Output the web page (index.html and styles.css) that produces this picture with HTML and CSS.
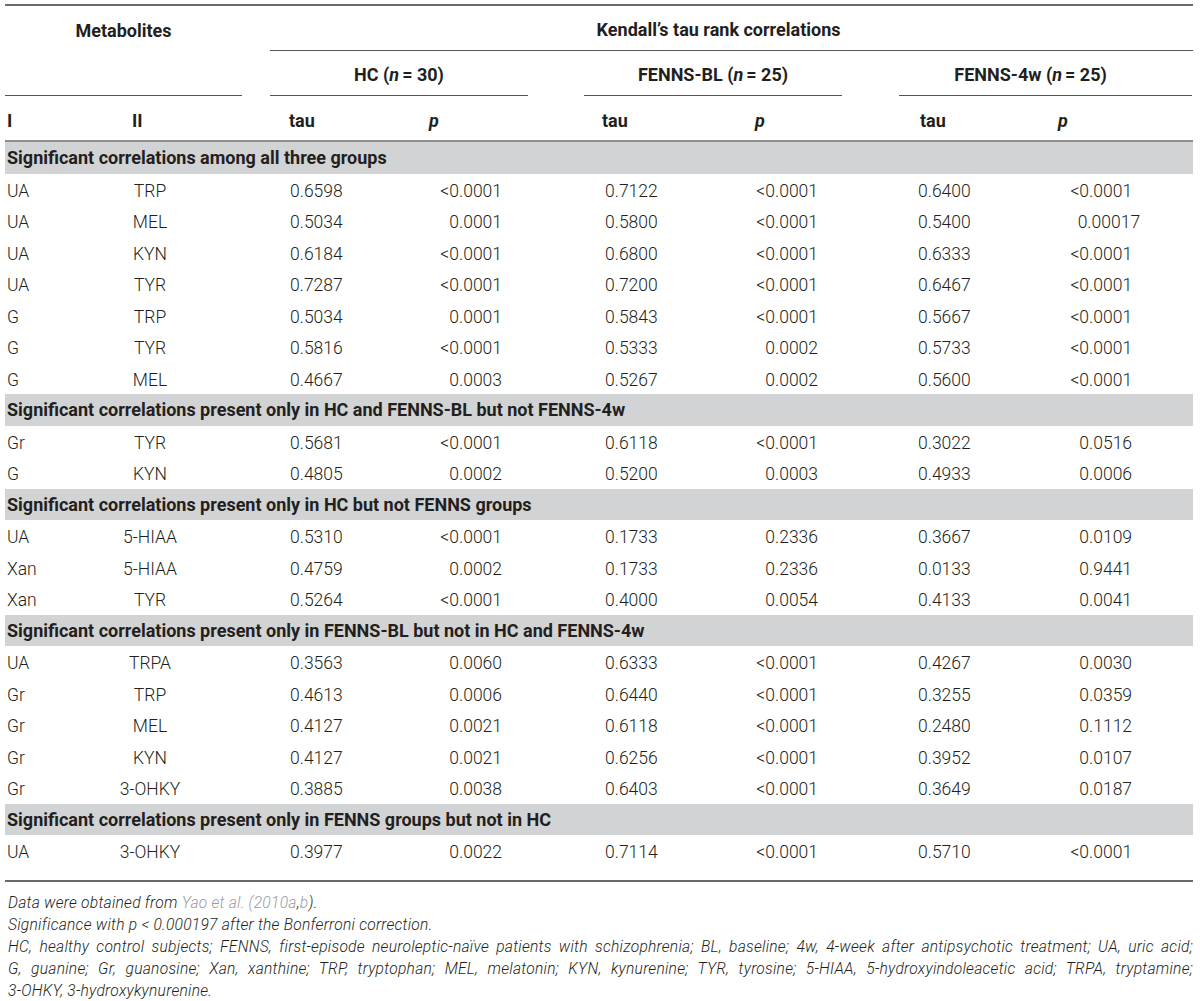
FILE: index.html
```html
<!DOCTYPE html>
<html lang="en">
<head>
<meta charset="utf-8">
<title>Kendall's tau rank correlations</title>
<link rel="stylesheet" href="styles.css">
</head>
<body>
<div class="page">
<table class="data">
  <colgroup>
    <col class="c1"><col class="c2"><col class="c3"><col class="c4">
    <col class="c5"><col class="c6"><col class="c7"><col class="c8">
  </colgroup>
  <thead>
    <tr class="h1">
      <th colspan="2" rowspan="2" class="metab"><div class="metab-box">Metabolites</div></th>
      <th colspan="6" class="kendall">Kendall’s tau rank correlations</th>
    </tr>
    <tr class="h2">
      <th colspan="2" class="grp"><div class="grp-box hc">HC (<i>n</i> = 30)</div></th>
      <th colspan="2" class="grp"><div class="grp-box bl">FENNS-BL (<i>n</i> = 25)</div></th>
      <th colspan="2" class="grp"><div class="grp-box w4">FENNS-4w (<i>n</i> = 25)</div></th>
    </tr>
    <tr class="h3">
      <th>I</th><th>II</th>
      <th>tau</th><th><i>p</i></th>
      <th>tau</th><th><i>p</i></th>
      <th>tau</th><th><i>p</i></th>
    </tr>
  </thead>
  <tbody>
    <tr class="sec"><td colspan="8">Significant correlations among all three groups</td></tr>
    <tr class="row"><td>UA</td><td>TRP</td><td>0.6598</td><td>&lt;0.0001</td><td>0.7122</td><td>&lt;0.0001</td><td>0.6400</td><td>&lt;0.0001</td></tr>
    <tr class="row"><td>UA</td><td>MEL</td><td>0.5034</td><td>0.0001</td><td>0.5800</td><td>&lt;0.0001</td><td>0.5400</td><td class="p-wide">0.00017</td></tr>
    <tr class="row"><td>UA</td><td>KYN</td><td>0.6184</td><td>&lt;0.0001</td><td>0.6800</td><td>&lt;0.0001</td><td>0.6333</td><td>&lt;0.0001</td></tr>
    <tr class="row"><td>UA</td><td>TYR</td><td>0.7287</td><td>&lt;0.0001</td><td>0.7200</td><td>&lt;0.0001</td><td>0.6467</td><td>&lt;0.0001</td></tr>
    <tr class="row"><td>G</td><td>TRP</td><td>0.5034</td><td>0.0001</td><td>0.5843</td><td>&lt;0.0001</td><td>0.5667</td><td>&lt;0.0001</td></tr>
    <tr class="row"><td>G</td><td>TYR</td><td>0.5816</td><td>&lt;0.0001</td><td>0.5333</td><td>0.0002</td><td>0.5733</td><td>&lt;0.0001</td></tr>
    <tr class="row"><td>G</td><td>MEL</td><td>0.4667</td><td>0.0003</td><td>0.5267</td><td>0.0002</td><td>0.5600</td><td>&lt;0.0001</td></tr>

    <tr class="sec"><td colspan="8">Significant correlations present only in HC and FENNS-BL but not FENNS-4w</td></tr>
    <tr class="row"><td>Gr</td><td>TYR</td><td>0.5681</td><td>&lt;0.0001</td><td>0.6118</td><td>&lt;0.0001</td><td>0.3022</td><td>0.0516</td></tr>
    <tr class="row"><td>G</td><td>KYN</td><td>0.4805</td><td>0.0002</td><td>0.5200</td><td>0.0003</td><td>0.4933</td><td>0.0006</td></tr>

    <tr class="sec"><td colspan="8">Significant correlations present only in HC but not FENNS groups</td></tr>
    <tr class="row"><td>UA</td><td>5-HIAA</td><td>0.5310</td><td>&lt;0.0001</td><td>0.1733</td><td>0.2336</td><td>0.3667</td><td>0.0109</td></tr>
    <tr class="row"><td>Xan</td><td>5-HIAA</td><td>0.4759</td><td>0.0002</td><td>0.1733</td><td>0.2336</td><td>0.0133</td><td>0.9441</td></tr>
    <tr class="row"><td>Xan</td><td>TYR</td><td>0.5264</td><td>&lt;0.0001</td><td>0.4000</td><td>0.0054</td><td>0.4133</td><td>0.0041</td></tr>

    <tr class="sec"><td colspan="8">Significant correlations present only in FENNS-BL but not in HC and FENNS-4w</td></tr>
    <tr class="row"><td>UA</td><td>TRPA</td><td>0.3563</td><td>0.0060</td><td>0.6333</td><td>&lt;0.0001</td><td>0.4267</td><td>0.0030</td></tr>
    <tr class="row"><td>Gr</td><td>TRP</td><td>0.4613</td><td>0.0006</td><td>0.6440</td><td>&lt;0.0001</td><td>0.3255</td><td>0.0359</td></tr>
    <tr class="row"><td>Gr</td><td>MEL</td><td>0.4127</td><td>0.0021</td><td>0.6118</td><td>&lt;0.0001</td><td>0.2480</td><td>0.1112</td></tr>
    <tr class="row"><td>Gr</td><td>KYN</td><td>0.4127</td><td>0.0021</td><td>0.6256</td><td>&lt;0.0001</td><td>0.3952</td><td>0.0107</td></tr>
    <tr class="row"><td>Gr</td><td>3-OHKY</td><td>0.3885</td><td>0.0038</td><td>0.6403</td><td>&lt;0.0001</td><td>0.3649</td><td>0.0187</td></tr>

    <tr class="sec"><td colspan="8">Significant correlations present only in FENNS groups but not in HC</td></tr>
    <tr class="row"><td>UA</td><td>3-OHKY</td><td>0.3977</td><td>0.0022</td><td>0.7114</td><td>&lt;0.0001</td><td>0.5710</td><td>&lt;0.0001</td></tr>
  </tbody>
</table>
<div class="notes">
  <p class="note">Data were obtained from <a class="ref">Yao et al. (2010a</a>,<a class="ref">b</a>).</p>
  <p class="note">Significance with p &lt; 0.000197 after the Bonferroni correction.</p>
  <p class="note just">HC, healthy control subjects; FENNS, first-episode neuroleptic-naïve patients with schizophrenia; BL, baseline; 4w, 4-week after antipsychotic treatment; UA, uric acid;</p>
  <p class="note just">G, guanine; Gr, guanosine; Xan, xanthine; TRP, tryptophan; MEL, melatonin; KYN, kynurenine; TYR, tyrosine; 5-HIAA, 5-hydroxyindoleacetic acid; TRPA, tryptamine;</p>
  <p class="note">3-OHKY, 3-hydroxykynurenine.</p>
</div>
</div>
</body>
</html>
```

FILE: styles.css
```css
* { box-sizing: border-box; }

html, body {
  margin: 0;
  padding: 0;
  background: #ffffff;
}

body {
  font-family: Roboto, "Liberation Sans", Arial, sans-serif;
  color: #231f20;
}

.page {
  width: 1200px;
  padding: 4px 7px 0 5px;
}

/* ---------- table ---------- */
table.data {
  width: 1188px;
  table-layout: fixed;
  border-collapse: separate;
  border-spacing: 0;
  border-top: 2px solid #6a6a6a;
  font-size: 17.5px;
  font-weight: 300;
}

col.c1 { width: 113px; }
col.c2 { width: 152px; }
col.c3 { width: 150px; }
col.c4 { width: 164px; }
col.c5 { width: 161px; }
col.c6 { width: 154px; }
col.c7 { width: 151px; }
col.c8 { width: 143px; }

th {
  padding: 0;
  font-weight: 700;
  text-align: left;
  font-size: 18px;
  white-space: nowrap;
}

th i {
  font-style: italic;
  padding-right: 3px;
}

/* header row 1 */
tr.h1 th { height: 45px; }

th.metab {
  vertical-align: top;
}

.metab-box {
  height: 90px;
  margin-right: 28px;
  padding-top: 14px;
  text-align: center;
  border-bottom: 1px solid #555555;
}

th.kendall {
  vertical-align: middle;
  text-align: center;
  padding: 2px 26px 0 0;
  border-bottom: 1px solid #555555;
}

/* header row 2 */
tr.h2 th { height: 45px; vertical-align: bottom; }

.grp-box {
  height: 45px;
  display: flex;
  align-items: center;
  justify-content: center;
  padding-top: 3px;
  border-bottom: 1px solid #555555;
}

.grp-box.hc { margin-right: 56px; }
.grp-box.bl { margin-right: 57px; }
.grp-box.w4 { margin-right: 1px; padding-right: 30px; }

/* header row 3 */
tr.h3 th {
  height: 46px;
  padding-top: 4px;
  vertical-align: middle;
  border-bottom: 2px solid #8e8e8e;
}

tr.h3 th:nth-child(1) { padding-left: 2px; }
tr.h3 th:nth-child(2) { padding-left: 14px; }
tr.h3 th:nth-child(3) { padding-left: 19px; }
tr.h3 th:nth-child(4) { padding-left: 9px; }
tr.h3 th:nth-child(5) { padding-left: 18px; }
tr.h3 th:nth-child(6) { padding-left: 10px; }
tr.h3 th:nth-child(7) { padding-left: 21px; }
tr.h3 th:nth-child(8) { padding-left: 8px; }

/* section rows */
tr.sec td {
  height: 31.5px;
  padding: 0 0 0 2px;
  background: #d2d3d5;
  font-weight: 700;
  font-size: 18px;
  white-space: nowrap;
  vertical-align: middle;
}

/* data rows */
tr.row td {
  height: 31.5px;
  padding: 3px 0 0 0;
  vertical-align: middle;
  white-space: nowrap;
}

tr.row td:nth-child(1) { padding-left: 2px; }
tr.row td:nth-child(2) { text-align: center; padding-right: 88px; }
tr.row td:nth-child(3) { padding-left: 20px; }
tr.row td:nth-child(4) { text-align: right; padding-right: 82px; }
tr.row td:nth-child(5) { padding-left: 21px; }
tr.row td:nth-child(6) { text-align: right; padding-right: 81px; }
tr.row td:nth-child(7) { padding-left: 19px; }
tr.row td:nth-child(8) { text-align: right; padding-right: 61px; }
tr.row td.p-wide { padding-right: 53px; }

/* ---------- footnotes ---------- */
.notes {
  width: 1188px;
  margin-top: 13px;
  padding: 10px 0 0 3px;
  border-top: 2px solid #6a6a6a;
  font-style: italic;
  font-weight: 300;
  font-size: 15.6px;
  letter-spacing: 0.25px;
}

.note {
  margin: 0;
  line-height: 22px;
  white-space: nowrap;
}

.note.just {
  text-align: justify;
  text-align-last: justify;
  white-space: normal;
}

.ref {
  color: #9a9aa4;
  text-decoration: none;
}
```
